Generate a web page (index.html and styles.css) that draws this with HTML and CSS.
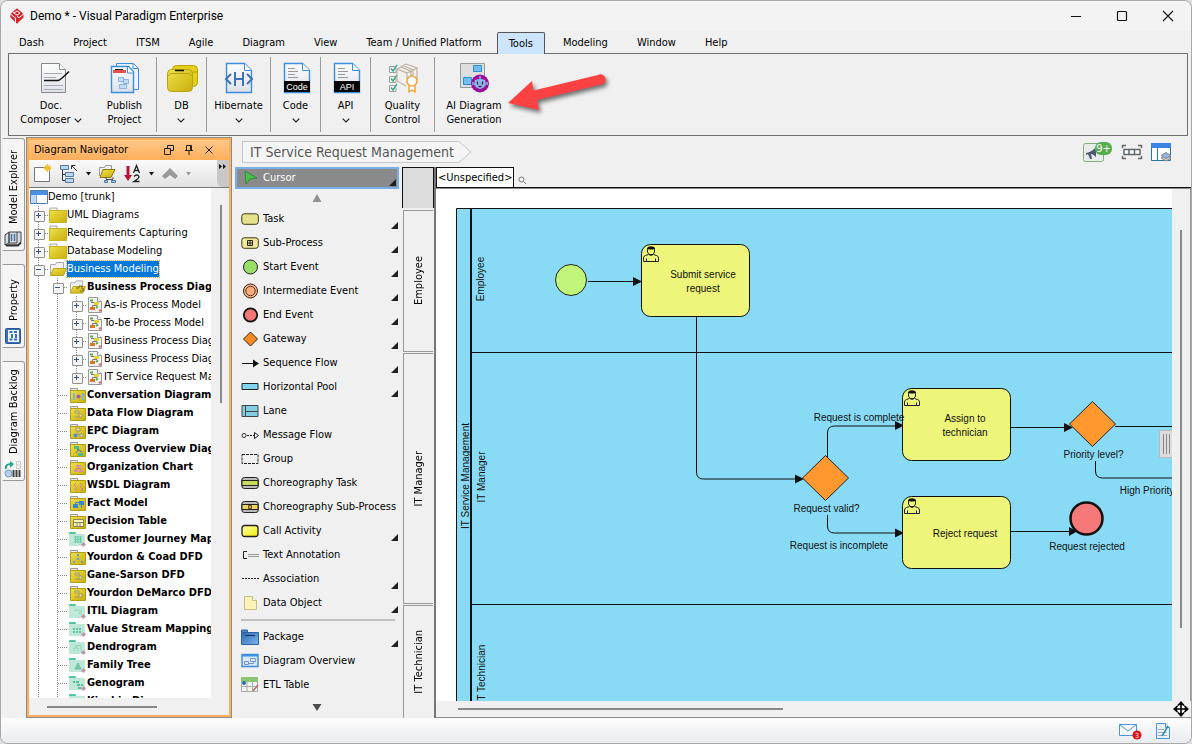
FILE: index.html
```
<!DOCTYPE html>
<html lang="en">
<head>
<meta charset="utf-8">
<title>Demo * - Visual Paradigm Enterprise</title>
<link rel="stylesheet" href="styles.css">
</head>
<body>
<svg class="defs" aria-hidden="true">
  <defs>
    <linearGradient id="gold" x1="0" y1="0" x2="1" y2="1"><stop offset="0" stop-color="#efe04a"/><stop offset="1" stop-color="#c9ae0c"/></linearGradient>
    <linearGradient id="paper" x1="0" y1="0" x2="0" y2="1"><stop offset="0" stop-color="#fdfdfd"/><stop offset="1" stop-color="#dde1e8"/></linearGradient>
    <linearGradient id="blue" x1="0" y1="0" x2="1" y2="1"><stop offset="0" stop-color="#2e66b4"/><stop offset="1" stop-color="#7db5ee"/></linearGradient>
    <linearGradient id="lemon" x1="0" y1="0" x2="1" y2="1"><stop offset="0" stop-color="#fdfdb0"/><stop offset="1" stop-color="#f2ee00"/></linearGradient>
    <symbol id="chevron" viewBox="0 0 8 5"><path d="M.7.7 4 4 7.3.7" fill="none" stroke="#222" stroke-width="1.2"/></symbol>
    <symbol id="folder" viewBox="0 0 18 16"><path d="M1 3V1h7v2" fill="#f4f4f4" stroke="#a9a9a9"/><path d="M.5 3.500h17v12H.5z" fill="url(#gold)" stroke="#cbb422"/></symbol>
    <symbol id="folder-open" viewBox="0 0 18 16"><path d="M1.500 14V3.500h5l1-2h7v6" fill="#f2f2f2" stroke="#a9a9a9"/><path d="M4.500 7.500h13l-3 7H1.500z" fill="url(#gold)" stroke="#bca51c"/></symbol>
    <symbol id="kind" viewBox="0 0 17 16"><path d="M1.500 4V1.500h7V4" fill="#eee" stroke="#999"/><path d="M1.500 3.500h15v12h-15z" fill="url(#gold)" stroke="#b39d16"/></symbol>
    <symbol id="kind-green" viewBox="0 0 17 16"><path d="M0 4V2q0-1 1-1h5q1 0 1 2z" fill="#4fc59c"/><path d="M0 3h15q1 0 1 1v10q0 1-1 1H1q-1 0-1-1z" fill="#c0e8d8"/><path d="M14.500 11.500v4M12.500 13.500h4" stroke="#e26477" stroke-width="1.500"/><circle cx="14.500" cy="13.500" r="1" fill="#89b8dd"/></symbol>
    <symbol id="bpd" viewBox="0 0 16 16"><path d="M1.500.5h9l4 4v11h-13z" fill="#f4f4f4" stroke="#999"/><path d="M10.500.5v4h4" fill="#fff" stroke="#999"/><path d="M4 5.500h6v3H5.500V12" fill="none" stroke="#777"/><rect x="7" y="5" width="5" height="3" rx="1" fill="#e3d625"/><path d="M3 3.500h3M11 9.500 9 11" stroke="#5ca84e" stroke-width="2"/><rect x="3" y="10" width="5" height="3" fill="#d77721"/><circle cx="13" cy="13.500" r="1.300" fill="#de6e72"/></symbol>
    <symbol id="corner" viewBox="0 0 8 8"><path d="M7 0v7H0z" fill="#202020"/></symbol>
    <symbol id="user" viewBox="0 0 16 16"><path d="M.5 15.500V12q0-2 2-2.500L5.500 8.500M15.500 15.500V12q0-2-2-2.500l-3-1M.5 15.500h15M3.500 12.500v3M12.500 12.500v3M6 8.500q2 2 4 0M4.500 3.500V6L6 8.500h4L11.500 6V3.500" fill="none" stroke="#222"/><path d="M4 4V2q1-1.700 4-1.700T12 2v2l-1-.8q-3 .6-6 0z" fill="#111"/></symbol>
  </defs>
</svg>

<header class="titlebar">
  <svg class="logo" width="14" height="16" viewBox="0 0 14 16"><path d="M7 .3 13.600 6v3.500L7 15.700.4 9.500V6z" fill="#d02a30"/><path d="M0 5.800 5.500 10v5M2.600 4 7 7.200l3-2.100L7 2.900 4 5.200M14 5.800 9 9.700 7 8.300" fill="none" stroke="#fff"/></svg>
  <h1>Demo * - Visual Paradigm Enterprise</h1>
  <div class="window-buttons">
    <button aria-label="Minimize"><svg width="12" height="12"><path d="M1 6.500h10" stroke="#111"/></svg></button>
    <button aria-label="Maximize"><svg width="12" height="12"><rect x="1.500" y="1.500" width="9" height="9" rx="1" fill="none" stroke="#111" stroke-width="1.200"/></svg></button>
    <button aria-label="Close"><svg width="12" height="12"><path d="M1 1l10 10M11 1 1 11" stroke="#111" stroke-width="1.100"/></svg></button>
  </div>
</header>

<nav class="menu">
  <button>Dash</button><button>Project</button><button>ITSM</button><button>Agile</button><button>Diagram</button><button>View</button><button>Team / Unified Platform</button><button class="active">Tools</button><button>Modeling</button><button>Window</button><button>Help</button>
</nav>

<section class="ribbon">
  <div class="group first">
    <button class="wide">
      <svg class="doc" width="32" height="32" viewBox="0 0 32 32"><path d="M2.500 1.500h18l6 6v23h-24z" fill="url(#paper)" stroke="#888"/><path d="M20.500 1.500v6h6" fill="#fff" stroke="#888"/><path d="M5 11.500h18M5 15.500h12M5 23.500h19M5 27.500h19" stroke="#aaa"/><path d="M5 18.500h14q2 0 11-9" fill="none" stroke="#111" stroke-width="1.500"/></svg>
      <span>Doc.<br>Composer <svg width="8" height="5"><use href="#chevron"/></svg></span>
    </button>
    <button>
      <svg width="32" height="32" viewBox="0 0 32 32"><path d="M7.500 1.500h17l5 5v21h-22z" fill="#eef4fb" stroke="#3b8de0"/><path d="M2.500 4.500h17l5 5v21h-22z" fill="url(#paper)" stroke="#3b8de0" stroke-width="1.400"/><path d="M18.500 5v6h6M24 1.500v5h5" fill="#fff" stroke="#3b8de0"/><path d="M4 8h13v3H4z" fill="#e2504f"/><path d="M6 7.500h8" stroke="#222"/><path d="M9.500 15.500h5v4h-5zM14.500 17.500h5v4h-5zM10.500 22.500h7v4h-7z" fill="#c2ddf6" stroke="#8db4df"/></svg>
      <span>Publish<br>Project</span>
    </button>
  </div>
  <div class="group narrow"><button>
    <svg width="32" height="32" viewBox="0 0 32 32"><rect x="6.500" y="3.500" width="25" height="21" rx="4" fill="#e4d01b" stroke="#b8a30d"/><path d="M6 10h26" stroke="#b8a30d"/><rect x="1.500" y="7.500" width="25" height="22" rx="4" fill="url(#gold)" stroke="#b8a30d"/><path d="M2 14q1-2.500 4-2.500h16q3 0 4 2.500" fill="none" stroke="#b8a30d"/><path d="M9 8.500h9" stroke="#111" stroke-width="1.500"/></svg>
    <span>DB<br><svg width="8" height="5"><use href="#chevron"/></svg></span></button></div>
  <div class="group mid"><button>
    <svg width="32" height="32" viewBox="0 0 32 32"><path d="M3.500 1.500h18l7 7v22h-25z" fill="url(#paper)" stroke="#3b8de0" stroke-width="1.400"/><path d="M21.500 1.500v7h7" fill="#fff" stroke="#3b8de0"/><path d="M8 12l-5 5 5 5M24 12l5 5-5 5M12 10v14M20 10v14M12 17h8" fill="none" stroke="#3b74b5" stroke-width="2"/></svg>
    <span>Hibernate<br><svg width="8" height="5"><use href="#chevron"/></svg></span></button></div>
  <div class="group narrow"><button>
    <svg class="badge-font" width="32" height="32" viewBox="0 0 32 32"><path d="M4.500 1.500h18l7 7v22h-25z" fill="url(#paper)" stroke="#3b8de0" stroke-width="1.400"/><path d="M22.500 1.500v7h7" fill="#fff" stroke="#3b8de0"/><path d="M8 6.500h7M8 9.500h10M8 12.500h7M8 15.500h10" stroke="#999"/><path d="M4 19h26v11H4z" fill="#050505"/><text x="17" y="28" text-anchor="middle">Code</text></svg>
    <span>Code<br><svg width="8" height="5"><use href="#chevron"/></svg></span></button></div>
  <div class="group narrow"><button>
    <svg class="badge-font" width="32" height="32" viewBox="0 0 32 32"><path d="M4.500 1.500h18l7 7v22h-25z" fill="url(#paper)" stroke="#3b8de0" stroke-width="1.400"/><path d="M22.500 1.500v7h7" fill="#fff" stroke="#3b8de0"/><path d="M8 6.500h7M8 9.500h10M8 12.500h7M8 15.500h10" stroke="#999"/><path d="M4 19h26v11H4z" fill="#050505"/><text x="17" y="28" text-anchor="middle">API</text></svg>
    <span>API<br><svg width="8" height="5"><use href="#chevron"/></svg></span></button></div>
  <div class="group mid"><button>
    <svg width="32" height="32" viewBox="0 0 32 32"><g fill="none"><path d="M8 4.500H2.500v6H9v-4M8 14.500H2.500v6H9v-4M8 23.500H2.500v6H9v-4" stroke="#a0a0a0"/><path d="M4 6.500l2 2.500 4-6M4 16.500l2 2.500 4-6M4 25.500l2 2.500 4-6" stroke="#3aa88a" stroke-width="1.400"/><path d="M19 2 30 6v12M10 7v12l9 5M10 7l10 4 10-5M10 7l9-5M20 11v6M14 5l10 4.500v4l2-1V8L16 3.500" stroke="#c2b19f" stroke-width="1.200"/></g><path d="M22 22v8l3-2 3 2v-8" fill="#fff" stroke="#f0a030" stroke-width="1.400"/><circle cx="25" cy="19" r="5" fill="#fff" stroke="#f5a43a" stroke-width="1.600"/></svg>
    <span>Quality<br>Control</span></button></div>
  <div class="group last"><button>
    <svg width="32" height="32" viewBox="0 0 32 32"><path d="M2.500 1.500h24v24h-24z" fill="#dedede" stroke="#999"/><path d="M15.500 3.500h8v6h-8zM5.500 15.500h8v7h-8z" fill="#72bdf2" stroke="#318ecb"/><circle cx="22" cy="21.500" r="9" fill="#9b109b"/><path d="M17 18q5-2 10 0l1 4q-1 4-6 5-5-1-6-5z" fill="#8cb7e8"/><path d="M22 14v4M15 20v3M29 20v3" stroke="#8cb7e8" stroke-width="1.500"/><path d="M19.500 19.500v3M24.500 19.500v3M20.500 24.500h3" stroke="#3a245e" stroke-width="1.300"/></svg>
    <span>AI Diagram<br>Generation</span></button></div>
  <svg class="callout" width="104" height="48" viewBox="505 68 104 48"><path d="M509 103 533 81l1.500 9.500L599 75a5 5 0 0 1 5 9L538 100l2 10z" fill="#fb4142"/></svg>
</section>

<main>
  <aside class="dock">
    <button class="dock-tab t1"><svg width="18" height="18" viewBox="0 0 18 18"><path d="M1 5 5 2v11l-4 2zM5 2h8v11H5zM13 2h4v10l-3 3H1" fill="#d5dbe3" stroke="#444"/><path d="M2 15.500h12l3-3" fill="none" stroke="#333" stroke-width="2"/><path d="M7.500 4v7M10.500 4v7" stroke="#4575a9" stroke-width="1.500"/></svg><span>Model Explorer</span></button>
    <button class="dock-tab t2"><svg width="18" height="18" viewBox="0 0 18 18"><rect x="1.500" y="1.500" width="15" height="15" rx="1" fill="#3970bf" stroke="#2a5494"/><path d="M4 3h11v12H4z" fill="#eef5ff"/><path d="M5.500 5h3M10 5h3M5.500 12.500h3M10 12.500h3M8 7v4M12 7v4" stroke="#3970bf" stroke-width="2"/></svg><span>Property</span></button>
    <button class="dock-tab t3"><svg width="18" height="18" viewBox="0 0 18 18"><circle cx="4.500" cy="13.500" r="3.500" fill="#b4d1ed" stroke="#7899b9"/><path d="M2 9q-1-5 5-5" fill="none" stroke="#25a58a" stroke-width="2"/><path d="M6 1l4 3-4 4z" fill="#25a58a"/><path d="M9.500 10v7M12.500 10v7M15.500 10v7" stroke="#444" stroke-width="2"/><path d="M12.500 1.500h4v7h-4zM12.500 5h4" fill="#eee" stroke="#ccc"/></svg><span>Diagram Backlog</span></button>
  </aside>

  <section class="navigator">
    <div class="nav-head"><h2>Diagram Navigator</h2>
      <button aria-label="Float"><svg width="10" height="10"><path d="M3.500 3V.5h6v5H7M.5 3.500h6v6h-6z" fill="none" stroke="#222"/></svg></button>
      <button aria-label="Pin"><svg width="10" height="10"><path d="M2.500 5V.5h5V5M6.500 1v4M1 5.500h8M5 6v4" fill="none" stroke="#222"/></svg></button>
      <button aria-label="Close panel"><svg width="10" height="10"><path d="M1.500 1.500l7 7M8.500 1.500l-7 7" stroke="#222"/></svg></button>
    </div>
    <div class="nav-tools">
      <button aria-label="New diagram"><svg width="20" height="20" viewBox="0 0 20 20"><path d="M1.500 3.500h15v14h-15z" fill="#fcfcfc" stroke="#777"/><path d="M14.500 0v8M10.500 4h8M12 1.500l5 5M17 1.500l-5 5" stroke="#f0c020" stroke-width="1.300"/></svg></button>
      <button aria-label="Structure"><svg width="20" height="20" viewBox="0 0 20 20"><path d="M1.500 1.500h8v4h-8zM6.500 8.500h8v4h-8zM6.500 14.500h8v4h-8z" fill="#bdd5f0" stroke="#52789f"/><path d="M3.500 6v10.500H6M3.500 10.500H6M18 7l-5-5M12.500 5V1.500h4" fill="none" stroke="#333"/></svg></button>
      <svg width="7" height="4"><path d="M1 0h5L3.500 3.500z" fill="#111"/></svg>
      <button aria-label="Group folders"><svg width="20" height="20" viewBox="0 0 20 20"><path d="M1.500 12V3.500h5l1-2h6v4" fill="#eee" stroke="#999"/><path d="M5 5.500h12l-4 8H2z" fill="url(#gold)" stroke="#8d7a10"/><path d="M8 15.500h7M8 13v2M15 13v2" stroke="#444"/><path d="M6.500 16.500h3v2h-3zM13.500 16.500h4v2h-4z" fill="#aacbee" stroke="#52789f"/></svg></button>
      <button aria-label="Sort"><svg width="18" height="20" viewBox="0 0 18 20"><path d="M4 2v11" stroke="#bb1237" stroke-width="3"/><path d="M0 11h8l-4 6z" fill="#bb1237"/><path d="M9.500 9l3-7.500 3 7.500M10.500 6.500h4M10 12.500q3-3 5 0 0 2-5 5h5.500" fill="none" stroke="#222" stroke-width="1.300"/></svg></button>
      <svg width="7" height="4"><path d="M1 0h5L3.500 3.500z" fill="#111"/></svg>
      <button aria-label="Up" disabled><svg width="18" height="14" viewBox="0 0 18 14"><path d="M1 9 9 1l8 8-3 3L9 8l-5 4z" fill="#999"/></svg></button>
      <svg width="7" height="4"><path d="M1 0h5L3.500 3.500z" fill="#999"/></svg>
      <button class="more" aria-label="More tools"><svg width="8" height="6"><path d="M0 0l3 2.500L0 5zM4 0l3 2.500L4 5z" fill="#111"/></svg></button>
    </div>
    <div class="tree-area">
      <ul class="tree">
        <li class="root"><svg width="18" height="16" viewBox="0 0 18 16"><path d="M.5 1.500h17v13H.5z" fill="#fff" stroke="#517cad"/><path d="M1 2h16v4H1z" fill="#4d91e6"/><path d="M1 6h5v8H1z" fill="#bddbf6"/><path d="M6.500 6v8" stroke="#8ba7c4"/></svg>Demo [trunk]</li>
        <li><i class="rail box plus"></i><svg class="fo"><use href="#folder"/></svg>UML Diagrams</li>
        <li><i class="rail box plus"></i><svg class="fo"><use href="#folder"/></svg>Requirements Capturing</li>
        <li><i class="rail box plus"></i><svg class="fo"><use href="#folder"/></svg>Database Modeling</li>
        <li><i class="rail box"></i><svg class="fo"><use href="#folder-open"/></svg><span class="selected">Business Modeling</span></li>
        <li class="kind"><i class="rail"></i><i class="rail box"></i><svg><use href="#folder-open"/><path d="M7 9h3v-2h3v3h2v2h-4" fill="none" stroke="#776d20"/></svg>Business Process Diagram</li>
        <li class="leaf"><i class="rail"></i><i class="rail"></i><i class="rail box plus"></i><svg><use href="#bpd"/></svg>As-is Process Model</li>
        <li class="leaf"><i class="rail"></i><i class="rail"></i><i class="rail box plus"></i><svg><use href="#bpd"/></svg>To-be Process Model</li>
        <li class="leaf"><i class="rail"></i><i class="rail"></i><i class="rail box plus"></i><svg><use href="#bpd"/></svg>Business Process Diagram1</li>
        <li class="leaf"><i class="rail"></i><i class="rail"></i><i class="rail box plus"></i><svg><use href="#bpd"/></svg>Business Process Diagram2</li>
        <li class="leaf"><i class="rail"></i><i class="rail"></i><i class="rail end box plus"></i><svg><use href="#bpd"/></svg>IT Service Request Management</li>
        <li class="kind"><i class="rail"></i><i class="rail stub"></i><svg><use href="#kind"/><path d="M4 6h2v7H4zM13 6h2v7h-2z" fill="#77b9dd"/><circle cx="9.500" cy="9.500" r="2" fill="#a259b0"/></svg>Conversation Diagram</li>
        <li class="kind"><i class="rail"></i><i class="rail stub"></i><svg><use href="#kind"/><path d="M6 6h4v2H6zM10 9h3v3h-3zM6 12h4" fill="#ece3a4" stroke="#a09a60"/></svg>Data Flow Diagram</li>
        <li class="kind"><i class="rail"></i><i class="rail stub"></i><svg><use href="#kind"/><path d="M7 5h4v3H7zM11 11h3v3h-3zM9 8v3h3" fill="#ece3a4" stroke="#a09a60"/><circle cx="6.500" cy="12.500" r="2" fill="#478ee0"/></svg>EPC Diagram</li>
        <li class="kind"><i class="rail"></i><i class="rail stub"></i><svg><use href="#kind"/><path d="M5 5h5v3H5zM9 12h5v3H9z" fill="#4cbb92"/><path d="M8 8l5 3M10 8l-3 4" stroke="#327fb5"/></svg>Process Overview Diagram</li>
        <li class="kind"><i class="rail"></i><i class="rail stub"></i><svg><use href="#kind"/><path d="M7 6h5v2H7zM5 11h4v2H5zM10 11h4v2h-4z" fill="#dc89b6"/><path d="M9.500 8v1.500M7 11V9.500h5V11" fill="none" stroke="#c47ba0"/></svg>Organization Chart</li>
        <li class="kind"><i class="rail"></i><i class="rail stub"></i><svg><use href="#kind"/><path d="M7 6 5 8l2 2M11 6l2 2-2 2M8 10.500l-2 1.500 2 2M12 10.500l2 1.500-2 2" fill="none" stroke="#d47bab"/></svg>WSDL Diagram</li>
        <li class="kind"><i class="rail"></i><i class="rail stub"></i><svg><use href="#kind"/><path d="M4 9h5v4H4zM10 6h5v4h-5z" fill="#3986d8"/><path d="M6.500 9V7.500H10M12.500 10v3" fill="none" stroke="#3986d8"/></svg>Fact Model</li>
        <li class="kind"><i class="rail"></i><i class="rail stub"></i><svg><use href="#kind"/><path d="M4.500 6.500h10v7h-10zM4 9.500h11M8 10v3M11 10v3" fill="#fff5b7" stroke="#8a8560"/></svg>Decision Table</li>
        <li class="kind"><i class="rail"></i><i class="rail stub"></i><svg><use href="#kind-green"/><path d="M5 6h8M5 8.500h8M5 11h8M6.500 5v7M9 5v7M11.500 5v7" stroke="#6bc9a7"/></svg>Customer Journey Mapping</li>
        <li class="kind"><i class="rail"></i><i class="rail stub"></i><svg><use href="#kind"/><path d="M9 6v3l-4 4M9 9l4 4" fill="none" stroke="#b1bb80"/><path d="M8 5h2v2H8zM4 12h2v2H4zM12 12h2v2h-2zM8 9h2v2H8z" fill="#6ba0cd"/></svg>Yourdon &amp; Coad DFD</li>
        <li class="kind"><i class="rail"></i><i class="rail stub"></i><svg><use href="#kind"/><path d="M6 6h4v2H6zM10 9h3v3h-3zM6 12h4" fill="#ece3a4" stroke="#a09a60"/></svg>Gane-Sarson DFD</li>
        <li class="kind"><i class="rail"></i><i class="rail stub"></i><svg><use href="#kind"/><path d="M6 6h4v2H6zM10 9h3v3h-3zM6 12h4" fill="#ece3a4" stroke="#a09a60"/></svg>Yourdon DeMarco DFD</li>
        <li class="kind"><i class="rail"></i><i class="rail stub"></i><svg><use href="#kind-green"/><path d="M5 8l3-1 5 1-3 2 3 2" fill="none" stroke="#8fd6bd"/></svg>ITIL Diagram</li>
        <li class="kind"><i class="rail"></i><i class="rail stub"></i><svg><use href="#kind-green"/><path d="M4 8h9M4 11h9" stroke="#64c5a2" stroke-width="2" stroke-dasharray="2 1"/></svg>Value Stream Mapping</li>
        <li class="kind"><i class="rail"></i><i class="rail stub"></i><svg><use href="#kind-green"/><path d="M5 12V9h4v3M7 9V6.500h5V12" fill="none" stroke="#8fd6bd"/></svg>Dendrogram</li>
        <li class="kind"><i class="rail"></i><i class="rail stub"></i><svg><use href="#kind-green"/><path d="M9 6l3 6H6zM9 9v3" fill="#84d3b5" stroke="#5fc09d"/></svg>Family Tree</li>
        <li class="kind"><i class="rail"></i><i class="rail stub"></i><svg><use href="#kind-green"/><path d="M4 6h2v2H4zM7 6h3v2H7zM8 9h3v2H8zM9 12h3v2H9zM12 9h2v2h-2z" fill="#58bf99"/></svg>Genogram</li>
        <li class="kind"><i class="rail"></i><i class="rail stub"></i><svg><use href="#kind-green"/></svg>Kinship Diagram</li>
      </ul>
      <div class="vbar"></div>
    </div>
    <div class="hbar"></div>
  </section>

  <section class="workspace">
    <div class="crumbs">
      <a href="#" class="crumb"><svg width="230" height="22" viewBox="0 0 230 22"><path d="M.5.500h216l12.500 10.500-12.500 10.500H.5z" fill="#f5f5f5" stroke="#c4c7ca"/></svg><span>IT Service Request Management</span></a>
      <div class="crumb-tools">
        <button aria-label="News"><svg width="32" height="22" viewBox="0 0 32 22"><rect x="1.500" y="2.500" width="20" height="18" rx="2" fill="#e8ebe8" stroke="#81ad7e"/><path d="M4 12q6-1 10-6v10q-3-3-5-3l1 5H8l-2-5-2 1z" fill="#4d5870"/><rect x="13" y="1" width="17" height="13" rx="6" fill="#55ad50"/><text x="21.500" y="11" text-anchor="middle" class="count">9+</text></svg></button>
        <button aria-label="Fit"><svg width="22" height="18" viewBox="0 0 22 18"><path d="M1.500 5V2.500H5M17 2.500h3.500V5M1.500 13v2.500H5M17 15.500h3.500V13" fill="none" stroke="#666" stroke-width="1.500"/><path d="M3 6.500h16v5H3zM8 6.500v5M13.500 6.500v5" fill="#fff" stroke="#60646b" stroke-width="1.500"/></svg></button>
        <button aria-label="Layout"><svg width="22" height="20" viewBox="0 0 22 20"><path d="M1.500 1.500h19v17h-19z" fill="#fff" stroke="#28779f"/><path d="M1 1h20v5H1z" fill="#3b83e5"/><path d="M7.500 6v12" stroke="#28779f"/><path d="M11 16l5-3 5 3-5 3z" fill="#ccc" stroke="#888"/><path d="M11 13.500l5-3 5 3-5 3z" fill="#8db8e8" stroke="#888"/></svg></button>
      </div>
    </div>
    <div class="work-row">
      <div class="palette">
        <button class="tool cursor"><svg width="18" height="16" viewBox="0 0 18 16"><path d="M4 1l12 7-7 1-4 5z" fill="#47c24a" stroke="#207b25" stroke-width=".7"/></svg><span>Cursor</span><svg class="more-tri" width="8" height="8"><use href="#corner"/></svg></button>
        <button class="scroller" aria-label="Scroll up"><svg width="10" height="8"><path d="M5 0l4.500 8H.5z" fill="#929292"/></svg></button>
        <button class="tool"><svg width="18" height="16" viewBox="0 0 18 16"><rect x=".8" y="2.800" width="16.500" height="10.500" rx="2.500" fill="#e4e18f" stroke="#3d3a10"/></svg><span>Task</span><svg class="more-tri" width="8" height="8"><use href="#corner"/></svg></button>
        <button class="tool"><svg width="18" height="16" viewBox="0 0 18 16"><rect x=".8" y="2.800" width="16.500" height="10.500" rx="2.500" fill="#f1e699" stroke="#3d3a10"/><path d="M6.500 5.500h5v5h-5zM9 5.500v5M6.500 8h5" fill="none" stroke="#222"/></svg><span>Sub-Process</span><svg class="more-tri" width="8" height="8"><use href="#corner"/></svg></button>
        <button class="tool"><svg width="18" height="16" viewBox="0 0 18 16"><circle cx="9.500" cy="8" r="7" fill="#97dd68" stroke="#222"/></svg><span>Start Event</span><svg class="more-tri" width="8" height="8"><use href="#corner"/></svg></button>
        <button class="tool"><svg width="18" height="16" viewBox="0 0 18 16"><circle cx="9.500" cy="8" r="7" fill="#fbb485" stroke="#33221c"/><circle cx="9.500" cy="8" r="4.700" fill="#f8ad7b" stroke="#553529"/></svg><span>Intermediate Event</span><svg class="more-tri" width="8" height="8"><use href="#corner"/></svg></button>
        <button class="tool"><svg width="18" height="16" viewBox="0 0 18 16"><circle cx="9.500" cy="8" r="6.700" fill="#ef7777" stroke="#111" stroke-width="1.800"/></svg><span>End Event</span><svg class="more-tri" width="8" height="8"><use href="#corner"/></svg></button>
        <button class="tool"><svg width="18" height="16" viewBox="0 0 18 16"><path d="M9.500 1 16.500 8l-7 7-7-7z" fill="#f88c22" stroke="#332519"/></svg><span>Gateway</span><svg class="more-tri" width="8" height="8"><use href="#corner"/></svg></button>
        <button class="tool"><svg width="18" height="16" viewBox="0 0 18 16"><path d="M1 8.500h12" stroke="#111"/><path d="M12 4.500l6 4-6 4z" fill="#111"/></svg><span>Sequence Flow</span><svg class="more-tri" width="8" height="8"><use href="#corner"/></svg></button>
        <button class="tool"><svg width="18" height="16" viewBox="0 0 18 16"><path d="M1 4.500h16v6H1z" fill="#7fd3ec" stroke="#222"/></svg><span>Horizontal Pool</span><svg class="more-tri" width="8" height="8"><use href="#corner"/></svg></button>
        <button class="tool"><svg width="18" height="16" viewBox="0 0 18 16"><path d="M1 2.500h16v11H1zM4.500 3v10M5 8.500h12" fill="#83cee3" stroke="#444"/></svg><span>Lane</span></button>
        <button class="tool"><svg width="18" height="16" viewBox="0 0 18 16"><circle cx="3" cy="8.500" r="2" fill="#fff" stroke="#222"/><path d="M6 8.500h7" stroke="#222" stroke-dasharray="2 1"/><path d="M13.500 5.500l4 3-4 3z" fill="#fff" stroke="#222"/></svg><span>Message Flow</span></button>
        <button class="tool"><svg width="18" height="16" viewBox="0 0 18 16"><path d="M1 3.500h16v9H1z" fill="none" stroke="#222" stroke-dasharray="3 1"/></svg><span>Group</span></button>
        <button class="tool"><svg width="18" height="16" viewBox="0 0 18 16"><rect x=".8" y="2.500" width="16.500" height="11" rx="2.500" fill="#bbb" stroke="#222"/><path d="M1 5.500h16v5H1z" fill="#cada59" stroke="#222"/></svg><span>Choreography Task</span></button>
        <button class="tool"><svg width="18" height="16" viewBox="0 0 18 16"><rect x=".8" y="2.500" width="16.500" height="11" rx="2.500" fill="#bbb" stroke="#222"/><path d="M1 5.500h16v5H1z" fill="#edd565" stroke="#222"/><path d="M7.500 6.500h3v3h-3z" fill="#bda54b" stroke="#665b20"/></svg><span>Choreography Sub-Process</span></button>
        <button class="tool"><svg width="18" height="16" viewBox="0 0 18 16"><rect x="1" y="2.500" width="16" height="11" rx="2.500" fill="url(#lemon)" stroke="#222" stroke-width="1.300"/></svg><span>Call Activity</span><svg class="more-tri" width="8" height="8"><use href="#corner"/></svg></button>
        <button class="tool"><svg width="18" height="16" viewBox="0 0 18 16"><path d="M6 4.500H2.500v7H6" fill="none" stroke="#222"/><path d="M7 7.500h11M7 9.500h11" stroke="#999"/></svg><span>Text Annotation</span></button>
        <button class="tool"><svg width="18" height="16" viewBox="0 0 18 16"><path d="M1 7.500h17" stroke="#222" stroke-dasharray="2 1"/></svg><span>Association</span><svg class="more-tri" width="8" height="8"><use href="#corner"/></svg></button>
        <button class="tool"><svg width="18" height="16" viewBox="0 0 18 16"><path d="M3.500 1.500h8l4 4v9h-12z" fill="#faf3b5" stroke="#c5bd88"/><path d="M11.500 1.500v4h4" fill="#fff" stroke="#c5bd88"/></svg><span>Data Object</span><svg class="more-tri" width="8" height="8"><use href="#corner"/></svg></button>
        <hr>
        <button class="tool"><svg width="18" height="16" viewBox="0 0 18 16"><path d="M.5 3V1h6v2" fill="#4784cc" stroke="#2d62a5"/><path d="M.5 3.500h17v12H.5z" fill="url(#blue)" stroke="#2d62a5"/><path d="M4 6.500h10" stroke="#173055"/></svg><span>Package</span><svg class="more-tri" width="8" height="8"><use href="#corner"/></svg></button>
        <button class="tool"><svg width="18" height="16" viewBox="0 0 18 16"><path d="M1 1.500h16v12H1z" fill="#d9e9f9" stroke="#4289d3" stroke-width="1.400"/><path d="M1 1.500h16v2H1z" fill="#3c92eb"/><path d="M3.500 8.500h4v3h-4zM9.500 5.500h5v3h-5zM8 10.500h4.500V8" fill="none" stroke="#7798bb"/></svg><span>Diagram Overview</span></button>
        <button class="tool"><svg width="18" height="16" viewBox="0 0 18 16"><path d="M.5 1.500h16v13H.5zM0 9.500h17M6 5v9M11.500 5v9" fill="#f4f4f4" stroke="#aaa"/><path d="M0 0h17v5H0z" fill="#8cc573"/><circle cx="3" cy="6" r="2" fill="#286dac"/><path d="M12 14l5-6" stroke="#b46b6b" stroke-width="1.500"/></svg><span>ETL Table</span></button>
        <button class="scroller down" aria-label="Scroll down"><svg width="10" height="7"><path d="M5 7L.5 0h9z" fill="#4d4d4d"/></svg></button>
      </div>

      <div class="lanes">
        <div class="lane-head"></div>
        <div class="lane l1"><span>Employee</span></div>
        <div class="lane l2"><span>IT Manager</span></div>
        <div class="lane l3"><span>IT Technician</span></div>
      </div>

      <div class="editor">
        <div class="editor-top"><button class="spec">&lt;Unspecified&gt;</button><svg width="9" height="9"><circle cx="3.500" cy="3.500" r="2.500" fill="none" stroke="#777"/><path d="M5.500 5.500 8 8" stroke="#777"/></svg></div>
        <div class="canvas-row">
          <div class="canvas">
            <svg class="diagram" width="100%" height="100%">
              <g transform="translate(-436 -189)">
                <path d="M456.500 208.500H2000V1200H456.500z" fill="#89dbf5" stroke="#111"/>
                <path d="M471 208v900" stroke="#111" stroke-width="2"/>
                <path d="M471 352.500h1500M471 604.500h1500" stroke="#111"/>
                <g text-anchor="middle">
                  <text transform="translate(484 279) rotate(-90)">Employee</text>
                  <text transform="translate(469 476) rotate(-90)">IT Service Management</text>
                  <text transform="translate(485 477) rotate(-90)">IT Manager</text>
                  <text transform="translate(485 674) rotate(-90)">IT Technician</text>
                </g>
                <g fill="none" stroke="#111">
                  <path d="M588 281.500h48M696.500 317v155q0 7 7 7h94M827.500 457v-24q0-7 7-7h62M827.500 515v11q0 7 7 7h62M1011 427.500h55M1011 531.500h58M1115 426.500h200M1095.500 461v10q0 7 7 7h200"/>
                </g>
                <path d="M633 277l9 4.500-9 4.500zM795 474.500l9 4.500-9 4.500zM895 421l9 4.500-9 4.500zM895 528.500l9 4.500-9 4.500zM1064 423l9 4.500-9 4.500z" fill="#111"/>
                <circle cx="571" cy="280" r="15.500" fill="#c1f579" stroke="#222"/>
                <g fill="#edf57a" stroke="#111"><rect x="641.500" y="244.500" width="108" height="72" rx="9"/><rect x="902.500" y="388.500" width="108" height="72" rx="9"/><rect x="902.500" y="496.500" width="108" height="72" rx="9"/></g>
                <use href="#user" x="643" y="246" width="16" height="16"/><use href="#user" x="904" y="390" width="16" height="16"/><use href="#user" x="904" y="498" width="16" height="16"/>
                <path d="M825.500 455.500l23 22.500-23 22.500-23-22.500zM1092.500 401.500l23 22.500-23 22.500-23-22.500z" fill="#ff982e" stroke="#222"/>
                <circle cx="1086.500" cy="518.500" r="16" fill="#f57979" stroke="#111" stroke-width="2.500"/>
                <path d="M1069 527l8 4.500-8 4.500z" fill="#111"/>
                <g text-anchor="middle">
                  <text x="703" y="278">Submit service</text><text x="703" y="292">request</text>
                  <text x="965" y="422">Assign to</text><text x="965" y="436">technician</text>
                  <text x="965" y="537">Reject request</text>
                  <text x="859" y="421">Request is complete</text>
                  <text x="826.500" y="512">Request valid?</text>
                  <text x="839" y="549">Request is incomplete</text>
                  <text x="1093.500" y="458">Priority level?</text>
                  <text x="1087" y="550">Request rejected</text>
                  <text x="1147" y="494">High Priority</text>
                </g>
              </g>
            </svg>
            <button class="grip" aria-label="Open side panel"><svg width="8" height="20"><path d="M1.500 0v20M4.500 0v20M7.500 0v20" stroke="#888"/></svg></button>
          </div>
          <div class="vscroll"><i></i></div>
        </div>
        <div class="hscroll"><i></i><svg width="16" height="16" viewBox="0 0 16 16"><path d="M8 0l3.500 4h-7zM8 16l3.500-4h-7zM0 8l4-3.500v7zM16 8l-4-3.500v7z" fill="#000"/><circle cx="8" cy="8" r="4.500" fill="#fff" stroke="#000" stroke-width="1.200"/><path d="M8 2v12M2 8h12" stroke="#000" stroke-width="1.600"/></svg></div>
      </div>
    </div>
  </section>
</main>

<footer class="status">
  <button aria-label="Messages"><svg width="24" height="20" viewBox="0 0 24 20"><path d="M1.500 3.500h17v11h-17zM2 4l8 6 8-6" fill="#f7faff" stroke="#4c93da"/><circle cx="19" cy="14" r="4.500" fill="#e81010"/><text x="19" y="17" text-anchor="middle">3</text></svg></button>
  <button aria-label="Notes"><svg width="16" height="18" viewBox="0 0 16 18"><path d="M1.500 1.500h9l4 4v11h-13z" fill="#eaf3fc" stroke="#4c93da"/><path d="M10.500 1.500v4h4" fill="#fff" stroke="#4c93da"/><path d="M3 7.500h6M3 10.500h9M3 13.500h9" stroke="#aaa"/><path d="M13 4 7 14" stroke="#2890b8" stroke-width="1.500"/></svg></button>
</footer>
</body>
</html>
```
FILE: styles.css
```
* { box-sizing: border-box; }
html { height: 100%; background: #ddd; }
body {
  margin: 0;
  height: 100vh;
  display: flex;
  flex-direction: column;
  overflow: hidden;
  background: #f0f0f0;
  border: 1px solid #a8a8a8;
  border-radius: 8px;
  color: #000;
  font: 11px/14px "DejaVu Sans Condensed", "DejaVu Sans", sans-serif;
}
button { margin: 0; padding: 0; border: 0; background: none; font: inherit; color: inherit; }
button svg, li svg { flex: none; display: block; }
.defs { position: absolute; width: 0; height: 0; }

.titlebar { flex: none; height: 30px; display: flex; align-items: center; padding: 0 17px 0 9px; background: #f3f3f3; }
.titlebar h1 { flex: 1; margin: 0 0 0 6px; font: 12px/16px Roboto, "Noto Sans", sans-serif; }
.window-buttons { display: flex; gap: 34px; }

.menu { flex: none; height: 23px; display: flex; gap: 1px; padding: 1px 0 0 4px; position: relative; z-index: 1; }
.menu button { padding: 0 14px; }
.menu .active { margin: 0 3px 0 0; padding: 0 11px; border: 1px solid #555; border-bottom: 0; border-radius: 2px 2px 0 0; background: #cde5fc; }

.ribbon { flex: none; position: relative; height: 83px; margin: -1px 3px 0 7px; display: flex; border: 1px solid #6e6e6e; padding: 3px 0; }
.group { display: flex; justify-content: center; border-right: 1px solid #9b9b9b; }
.group button { width: 100%; display: flex; flex-direction: column; align-items: center; gap: 5px; padding-top: 5px; text-align: center; white-space: nowrap; }
.group span svg { display: inline; }
.first { width: 148px; }
.first .wide { flex: none; width: 84px; }
.wide .doc { margin-left: 8px; }
.narrow { width: 50px; }
.mid { width: 64px; }
.last { width: 78px; border: 0; }
.badge-font text { font: 9px "Liberation Sans", sans-serif; fill: #fff; }
.callout { position: absolute; left: 495px; top: 14px; filter: drop-shadow(2px 3px 2px #0008); }

main { flex: 1; min-height: 0; display: flex; }
.dock { flex: none; width: 25px; padding: 2px 1px 0 1px; display: flex; flex-direction: column; gap: 13px; }
.dock-tab { writing-mode: vertical-rl; transform: rotate(180deg); display: flex; align-items: center; gap: 6px; width: 23px; padding: 2px 0; border: 1px solid #999; border-right: 1px solid #eee; border-radius: 3px 0 0 3px; background: #f5f5f5; }
.dock-tab svg { transform: rotate(180deg); }
.t1 { height: 113px; }
.t2 { height: 84px; }
.t3 { height: 120px; }

.navigator { flex: none; width: 206px; display: flex; flex-direction: column; margin-top: 1px; border: 1px solid #8c8c8c; outline: 2px solid #fcae5d; outline-offset: -3px; padding: 2px; }
.nav-head { flex: none; height: 20px; display: flex; align-items: center; gap: 10px; padding: 0 15px 0 5px; background: linear-gradient(#ffc98a, #fdae59); }
.nav-head h2 { flex: 1; margin: 0; font: inherit; }
.nav-tools { flex: none; height: 28px; display: flex; align-items: center; gap: 6px; padding-left: 4px; background: linear-gradient(#fafafa, #e2e2e2); border-bottom: 1px solid #777; }
.nav-tools .more { align-self: stretch; width: 12px; margin-left: auto; padding: 4px 2px; background: #c8c8c8; border-radius: 0 0 0 6px; }
.nav-tools .more svg { height: 20px; }
.tree-area { flex: 1; min-height: 0; display: flex; }
.tree { flex: 1; min-width: 0; margin: 0; padding: 0; overflow: hidden; background: #fff; list-style: none; }
.tree li { height: 18px; display: flex; align-items: center; white-space: nowrap; }
.tree .fo { width: 18px; height: 16px; margin-left: 1px; }
.tree .root svg { margin-left: 1px; }
.kind { font-weight: bold; }
.kind svg { width: 17px; height: 16px; margin: 0 1px 0 2px; }
.leaf svg { width: 16px; height: 16px; margin: 0 1px; }
.selected { background: #0078d7; color: #fff; outline: 1px dotted #e99a51; line-height: 16px; }
.rail { flex: none; align-self: stretch; width: 19px; position: relative; background: repeating-linear-gradient(#888 0 1px, transparent 1px 2px) 9px 0 / 1px 100% no-repeat; }
.rail.end { background-size: 1px 50%; }
.rail.stub::after, .rail.box::after { content: ""; position: absolute; left: 10px; top: 9px; width: 9px; height: 1px; background: repeating-linear-gradient(90deg, #888 0 1px, transparent 1px 2px); }
.rail.box::before { content: ""; position: absolute; z-index: 1; left: 5px; top: 5px; width: 9px; height: 9px; border: 1px solid #919191; border-radius: 1px; background: linear-gradient(#35508f, #35508f) 1px 3px / 5px 1px no-repeat, #f5f5f5; }
.rail.plus::before { background: linear-gradient(#35508f, #35508f) 1px 3px / 5px 1px no-repeat, linear-gradient(#35508f, #35508f) 3px 1px / 1px 5px no-repeat, #f5f5f5; }
.vbar { flex: none; width: 18px; background: linear-gradient(#888, #888) 9px 17px / 2px 198px no-repeat; }
.hbar { flex: none; height: 17px; background: linear-gradient(#888, #888) 18px 8px / 110px 2px no-repeat; }

.workspace { flex: 1; min-width: 0; display: flex; flex-direction: column; margin-left: 2px; }
.crumbs { flex: none; height: 31px; display: flex; align-items: center; justify-content: space-between; padding: 0 19px 0 8px; }
.crumb { display: grid; align-items: center; color: #555; text-decoration: none; font: 14px/20px "DejaVu Sans Condensed", sans-serif; }
.crumb > * { grid-area: 1 / 1; }
.crumb span { padding-left: 8px; }
.crumb-tools { display: flex; align-items: center; gap: 7px; }
.count { font: 11px "DejaVu Sans Condensed", sans-serif; fill: #fff; }
.work-row { flex: 1; min-height: 0; display: flex; }

.palette { flex: none; width: 168px; display: flex; flex-direction: column; padding: 0 3px 0 1px; }
.tool { flex: none; position: relative; display: flex; align-items: center; gap: 4px; height: 24px; padding-left: 6px; text-align: left; white-space: nowrap; }
.cursor { height: 22px; border: 2px solid #77aee8; background: #8a8a8a; color: #fff; padding-left: 4px; }
.more-tri { position: absolute; right: 0; bottom: 1px; }
.cursor .more-tri { bottom: 0; }
.scroller { flex: none; height: 18px; display: flex; justify-content: center; align-items: center; }
.palette hr { flex: none; width: 154px; height: 2px; margin: 4px 0 4px 6px; border: 0; background: #c2c2c2; }
.down { flex: 1; }

.lanes { flex: none; width: 32px; display: flex; flex-direction: column; }
.lane-head { flex: none; height: 41px; margin-bottom: 2px; background: #dcdcdc; border: 1px solid #111; border-bottom: 0; }
.lane { display: flex; align-items: center; justify-content: center; border: 1px solid #999; border-width: 1px 0 1px 1px; margin: 0 1px 1px; }
.lane span { writing-mode: vertical-rl; transform: rotate(180deg); }
.l1 { flex: none; height: 142px; }
.l2 { flex: none; height: 251px; }
.l3 { flex: 1; border-bottom: 0; margin-bottom: 0; }

.editor { flex: 1; min-width: 0; display: flex; flex-direction: column; border-left: 2px solid #777; }
.editor-top { flex: none; height: 21px; display: flex; align-items: flex-end; gap: 4px; border-bottom: 1px solid #111; }
.spec { height: 20px; padding: 0 1px; border: 1px solid #111; border-bottom: 0; background: #fff; white-space: nowrap; }
.editor-top svg { margin-bottom: 2px; }
.canvas-row { flex: 1; min-height: 0; display: flex; border-top: 1px solid #888; }
.canvas { flex: 1; min-width: 0; position: relative; background: #fff; }
.diagram { display: block; }
.diagram text { font: 10px "Liberation Sans", Arial, sans-serif; fill: #111; }
.grip { position: absolute; right: 0; top: 241px; width: 13px; height: 28px; padding: 0 0 0 2px; background: #dcdcdc; border: 1px solid #bbb; border-right: 0; }
.vscroll { flex: none; width: 19px; border-right: 1px solid #999; }
.vscroll i { display: block; width: 2px; height: 398px; margin: 41px 0 0 8px; background: #888; }
.hscroll { flex: none; height: 17px; display: flex; align-items: center; border-bottom: 1px solid #888; }
.hscroll i { width: 325px; height: 2px; margin-left: 22px; background: #888; }
.hscroll svg { margin: 0 2px 0 auto; }

.status { flex: none; height: 25px; display: flex; align-items: center; justify-content: flex-end; gap: 13px; padding-right: 20px; background: linear-gradient(#fdfdfd, #e9ebee); }
.status text { font: 7px "DejaVu Sans Condensed", sans-serif; fill: #fff; }
```
